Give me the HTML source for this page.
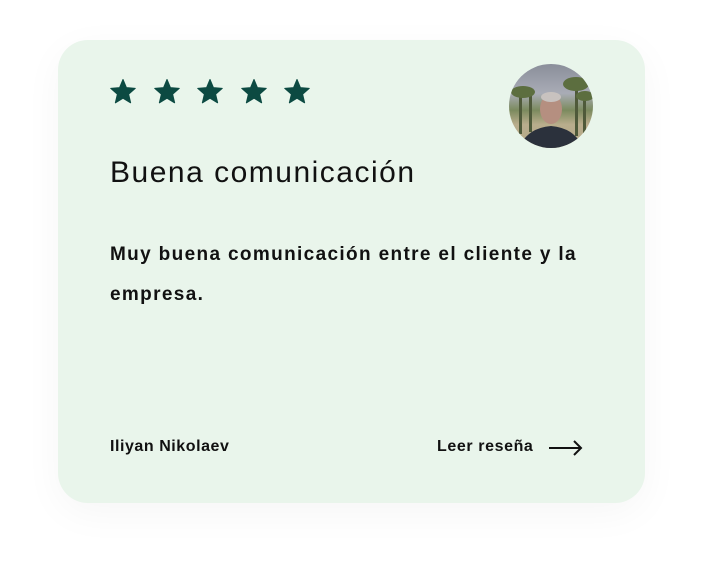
<!DOCTYPE html>
<html><head><meta charset="utf-8"><style>
html,body{margin:0;padding:0;background:#fff;width:701px;height:576px;overflow:hidden;font-family:"Liberation Sans",sans-serif;}
.card{position:absolute;left:58px;top:40px;width:587px;height:463px;background:#e9f5eb;border-radius:30px;box-shadow:0 10px 40px rgba(0,0,0,0.04);}
.stars{position:absolute;left:109px;top:79px;}
.stars svg{position:absolute;top:0;}
.av{position:absolute;left:509px;top:64px;width:84px;height:84px;border-radius:50%;overflow:hidden;background:linear-gradient(#8a8e9a 0%,#a9acb6 35%,#7b8a5e 55%,#b9ad8c 72%,#b6aa8a 100%);}
.h{position:absolute;left:110px;top:156px;font-size:30px;color:#111;letter-spacing:1.5px;white-space:nowrap;}
.p{position:absolute;left:110px;top:235px;width:530px;font-size:19px;line-height:40px;color:#111;font-weight:bold;letter-spacing:1.35px;}
.n{position:absolute;left:110px;top:438px;font-size:16px;font-weight:bold;color:#111;letter-spacing:0.55px;}
.l{position:absolute;left:437px;top:438px;font-size:16px;font-weight:bold;color:#111;letter-spacing:0.6px;}
</style></head><body>
<div class="card"></div>
<div class="stars">
<svg style="left:0" width="28" height="26" viewBox="0 0 24 23"><path d="M12 0.5l3 7.2 7.8.6-5.9 5.1 1.8 7.6L12 16.9 5.3 21l1.8-7.6L1.2 8.3l7.8-.6z" fill="#0c4a42" stroke="#0c4a42" stroke-linejoin="round" stroke-width="1"/></svg>
<svg style="left:44px" width="28" height="26" viewBox="0 0 24 23"><path d="M12 0.5l3 7.2 7.8.6-5.9 5.1 1.8 7.6L12 16.9 5.3 21l1.8-7.6L1.2 8.3l7.8-.6z" fill="#0c4a42" stroke="#0c4a42" stroke-linejoin="round" stroke-width="1"/></svg>
<svg style="left:87px" width="28" height="26" viewBox="0 0 24 23"><path d="M12 0.5l3 7.2 7.8.6-5.9 5.1 1.8 7.6L12 16.9 5.3 21l1.8-7.6L1.2 8.3l7.8-.6z" fill="#0c4a42" stroke="#0c4a42" stroke-linejoin="round" stroke-width="1"/></svg>
<svg style="left:131px" width="28" height="26" viewBox="0 0 24 23"><path d="M12 0.5l3 7.2 7.8.6-5.9 5.1 1.8 7.6L12 16.9 5.3 21l1.8-7.6L1.2 8.3l7.8-.6z" fill="#0c4a42" stroke="#0c4a42" stroke-linejoin="round" stroke-width="1"/></svg>
<svg style="left:174px" width="28" height="26" viewBox="0 0 24 23"><path d="M12 0.5l3 7.2 7.8.6-5.9 5.1 1.8 7.6L12 16.9 5.3 21l1.8-7.6L1.2 8.3l7.8-.6z" fill="#0c4a42" stroke="#0c4a42" stroke-linejoin="round" stroke-width="1"/></svg>
</div>
<div class="av"><svg width="84" height="84" viewBox="0 0 84 84">
<g fill="#4f5a3a"><rect x="10" y="30" width="3" height="40"/><rect x="20" y="28" width="3" height="40"/><rect x="66" y="22" width="3" height="50"/><rect x="74" y="32" width="3" height="40"/></g>
<g fill="#5c6e3f"><ellipse cx="14" cy="28" rx="12" ry="6"/><ellipse cx="67" cy="20" rx="13" ry="7"/><ellipse cx="76" cy="32" rx="9" ry="5"/></g>
<path d="M10 84 Q18 64 42 62 Q66 64 74 84Z" fill="#2b313c"/>
<ellipse cx="42" cy="45" rx="11" ry="15" fill="#b58f80"/>
<ellipse cx="42" cy="33" rx="10" ry="5" fill="#c8c2bf"/>
</svg></div>
<div class="h">Buena comunicación</div>
<div class="p">Muy buena comunicación entre el cliente y la empresa.</div>
<div class="n">Iliyan Nikolaev</div>
<div class="l">Leer reseña</div>
<svg style="position:absolute;left:548px;top:439px" width="36" height="18" viewBox="0 0 36 18"><path d="M1 9H33M26 2L33 9L26 16" fill="none" stroke="#111" stroke-width="2"/></svg>
</body></html>
